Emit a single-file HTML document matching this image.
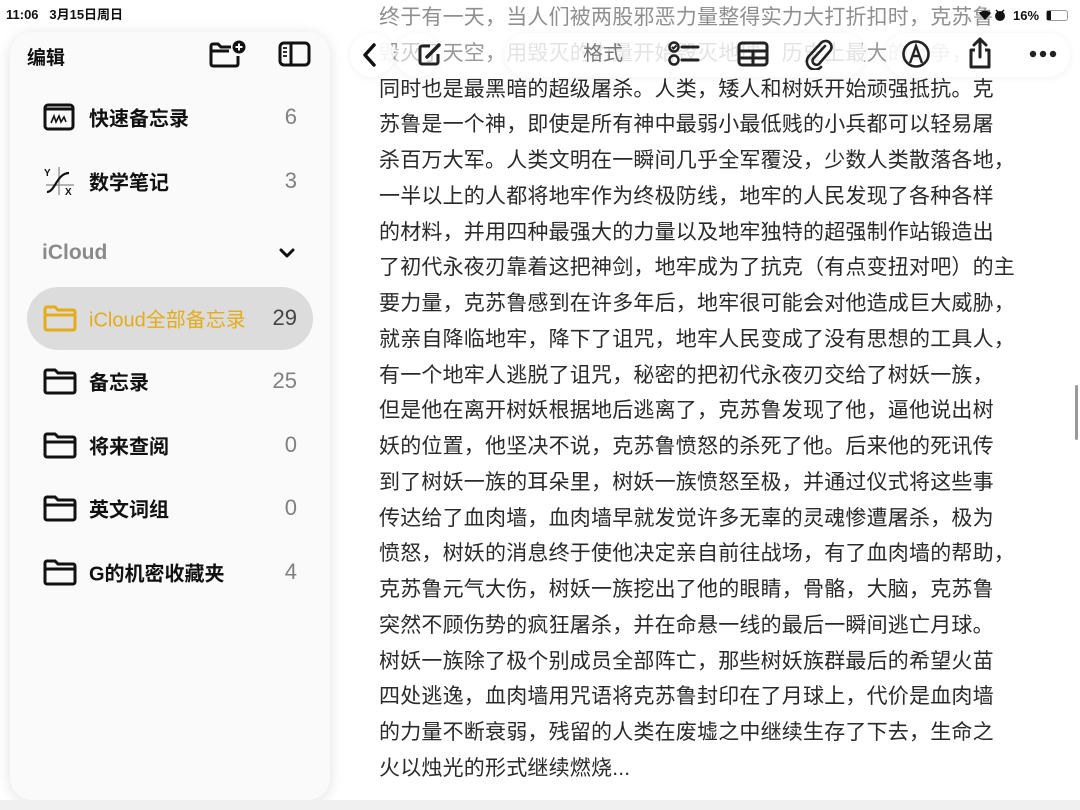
<!DOCTYPE html>
<html><head><meta charset="utf-8"><style>
*{margin:0;padding:0;box-sizing:border-box}
body{width:1080px;height:810px;overflow:hidden;background:#fff;font-family:"Liberation Sans","Noto Sans CJK SC",sans-serif;position:relative}
.txt{position:absolute;left:379px;top:0;font-size:21px;line-height:35.75px;color:#2a2a2a;white-space:nowrap;letter-spacing:0.2px}
.txt div:first-child{color:#8f8f8f}
.txt div:nth-child(2){color:#999}
.status{position:absolute;left:6px;top:8px;font-size:13px;font-weight:bold;color:#111;line-height:1}
.panel{position:absolute;left:10px;top:32px;width:320px;height:768px;background:#fafafa;border-radius:22px;box-shadow:0 2px 14px rgba(0,0,0,0.12)}
.row{position:absolute;left:0;width:320px;height:40px}
.row .lab{position:absolute;left:79px;top:50%;transform:translateY(-50%);font-size:20px;font-weight:bold;color:#111}
.row .cnt{position:absolute;right:33px;top:50%;transform:translateY(-50%);font-size:22px;color:#808080}
.row svg{position:absolute;left:33px;top:50%;transform:translateY(-50%)}
.sel{position:absolute;left:17px;top:255px;width:286px;height:63px;background:#dcdcdc;border-radius:32px}
.bar{position:absolute;top:33px;height:44px;background:rgba(255,255,255,0.82);border-radius:22px;box-shadow:0 1px 8px rgba(0,0,0,0.06)}
.ic{position:absolute}
</style></head><body>
<div class="txt">
<div>终于有一天，当人们被两股邪恶力量整得实力大打折扣时，克苏鲁</div>
<div>毁灭了天空，用毁灭的力量开始毁灭地球，历史上最大的战争，</div>
<div>同时也是最黑暗的超级屠杀。人类，矮人和树妖开始顽强抵抗。克</div>
<div>苏鲁是一个神，即使是所有神中最弱小最低贱的小兵都可以轻易屠</div>
<div>杀百万大军。人类文明在一瞬间几乎全军覆没，少数人类散落各地，</div>
<div>一半以上的人都将地牢作为终极防线，地牢的人民发现了各种各样</div>
<div>的材料，并用四种最强大的力量以及地牢独特的超强制作站锻造出</div>
<div>了初代永夜刃靠着这把神剑，地牢成为了抗克（有点变扭对吧）的主</div>
<div>要力量，克苏鲁感到在许多年后，地牢很可能会对他造成巨大威胁，</div>
<div>就亲自降临地牢，降下了诅咒，地牢人民变成了没有思想的工具人，</div>
<div>有一个地牢人逃脱了诅咒，秘密的把初代永夜刃交给了树妖一族，</div>
<div>但是他在离开树妖根据地后逃离了，克苏鲁发现了他，逼他说出树</div>
<div>妖的位置，他坚决不说，克苏鲁愤怒的杀死了他。后来他的死讯传</div>
<div>到了树妖一族的耳朵里，树妖一族愤怒至极，并通过仪式将这些事</div>
<div>传达给了血肉墙，血肉墙早就发觉许多无辜的灵魂惨遭屠杀，极为</div>
<div>愤怒，树妖的消息终于使他决定亲自前往战场，有了血肉墙的帮助，</div>
<div>克苏鲁元气大伤，树妖一族挖出了他的眼睛，骨骼，大脑，克苏鲁</div>
<div>突然不顾伤势的疯狂屠杀，并在命悬一线的最后一瞬间逃亡月球。</div>
<div>树妖一族除了极个别成员全部阵亡，那些树妖族群最后的希望火苗</div>
<div>四处逃逸，血肉墙用咒语将克苏鲁封印在了月球上，代价是血肉墙</div>
<div>的力量不断衰弱，残留的人类在废墟之中继续生存了下去，生命之</div>
<div>火以烛光的形式继续燃烧...</div>
</div>

<!-- toolbar pills -->
<div class="bar" style="left:350px;width:44px;background:rgba(255,255,255,0.9)"></div>
<div class="bar" style="left:395px;width:45px;background:rgba(255,255,255,0.5)"></div>
<div class="bar" style="left:505px;width:360px;background:rgba(255,255,255,0.72)"></div>
<div class="bar" style="left:885px;width:185px;background:rgba(255,255,255,0.88)"></div>
<div style="position:absolute;left:583px;top:44px;font-size:20px;line-height:20px;color:#777">格式</div>
<svg class="ic" style="left:360px;top:42px" width="20" height="26" viewBox="0 0 20 26"><path d="M14 3 L5 13 L14 23" fill="none" stroke="#111" stroke-width="3.5" stroke-linecap="round" stroke-linejoin="round"/></svg>
<svg class="ic" style="left:417px;top:41px" width="28" height="26" viewBox="0 0 28 26"><path d="M13 5 H5 a2 2 0 0 0 -2 2 V21 a2 2 0 0 0 2 2 H19 a2 2 0 0 0 2 -2 V13" fill="none" stroke="#222" stroke-width="3"/><path d="M10 16 L22 4" stroke="#222" stroke-width="3.5" stroke-linecap="round"/></svg>
<svg class="ic" style="left:667px;top:41px" width="34" height="26" viewBox="0 0 34 26"><circle cx="7" cy="6" r="4.5" fill="none" stroke="#222" stroke-width="2.5"/><path d="M5 6 l1.5 1.5 3-3" stroke="#222" stroke-width="2" fill="none"/><circle cx="7" cy="19" r="4.5" fill="none" stroke="#222" stroke-width="2.5"/><path d="M15 6 H31 M15 19 H31" stroke="#222" stroke-width="3" stroke-linecap="round"/></svg>
<svg class="ic" style="left:737px;top:41px" width="32" height="26" viewBox="0 0 32 26"><rect x="2" y="2" width="28" height="22" rx="3" fill="none" stroke="#222" stroke-width="3"/><path d="M2 10 H30 M2 17 H30 M16 10 V24" stroke="#222" stroke-width="3"/></svg>
<svg class="ic" style="left:805px;top:38px" width="30" height="32" viewBox="0 0 30 32"><path d="M22 10 L10 23 a4 4 0 0 0 6 5 L27 15 a6 6 0 0 0 -9 -8 L6 20 a8 8 0 0 0 12 11" fill="none" stroke="#222" stroke-width="2.6" stroke-linecap="round" transform="translate(-2 -2)"/></svg>
<svg class="ic" style="left:901px;top:39px" width="30" height="30" viewBox="0 0 30 30"><circle cx="15" cy="15" r="12.5" fill="none" stroke="#222" stroke-width="2.6"/><path d="M9 24 L15 7 L21 24 M12 17 H18" fill="none" stroke="#222" stroke-width="2.4"/></svg>
<svg class="ic" style="left:966px;top:36px" width="28" height="34" viewBox="0 0 28 34"><path d="M9 14 H5 V31 H23 V14 H19" fill="none" stroke="#222" stroke-width="3" stroke-linejoin="round"/><path d="M14 21 V3 M8 9 L14 3 L20 9" fill="none" stroke="#222" stroke-width="3" stroke-linecap="round" stroke-linejoin="round"/></svg>
<svg class="ic" style="left:1029px;top:49px" width="28" height="10" viewBox="0 0 28 10"><circle cx="4" cy="5" r="3.2" fill="#222"/><circle cx="14" cy="5" r="3.2" fill="#222"/><circle cx="24" cy="5" r="3.2" fill="#222"/></svg>

<!-- status -->
<div class="status">11:06&nbsp;&nbsp;&nbsp;3月15日周日</div>
<svg class="ic" style="left:978px;top:9px" width="36" height="13" viewBox="0 0 36 13"><path d="M1 4 a9 9 0 0 1 12 0 L7 11Z" fill="#111"/><circle cx="22" cy="7" r="5" fill="#111"/><path d="M18 1 l2 2 M26 1 l-2 2" stroke="#111" stroke-width="1.5"/></svg>
<div style="position:absolute;left:1013px;top:9px;font-size:13px;line-height:13px;font-weight:bold;color:#111">16%</div>
<div style="position:absolute;left:1046px;top:10px;width:22px;height:11px;border:1.5px solid #999;border-radius:3px"><div style="width:4px;height:100%;background:#111"></div></div>

<!-- sidebar -->
<div class="panel">
<div style="position:absolute;left:17px;top:11px;font-size:19px;font-weight:bold;color:#111">编辑</div>
<svg class="ic" style="left:199px;top:7px" width="38" height="30" viewBox="0 0 38 30"><path d="M22 8 H12 L9 5 H4 a2 2 0 0 0 -2 2 V25 a2 2 0 0 0 2 2 H27 a2 2 0 0 0 2 -2 V17" fill="none" stroke="#111" stroke-width="3"/><path d="M2 12 H20" stroke="#111" stroke-width="3"/><circle cx="30" cy="8" r="6.5" fill="#111"/><path d="M30 4.5 V11.5 M26.5 8 H33.5" stroke="#fff" stroke-width="2"/></svg>
<svg class="ic" style="left:268px;top:9px" width="33" height="26" viewBox="0 0 33 26"><rect x="2" y="2" width="29" height="22" rx="4" fill="none" stroke="#111" stroke-width="3"/><path d="M13 2 V24" stroke="#111" stroke-width="3"/><path d="M5 7 H9 M5 11 H9 M5 15 H9" stroke="#111" stroke-width="1.8"/></svg>

<div class="row" style="top:65px"><svg width="32" height="28" viewBox="0 0 32 28"><rect x="2" y="2" width="28" height="24" rx="3" fill="none" stroke="#111" stroke-width="3"/><path d="M2 6 H30" stroke="#111" stroke-width="3"/><path d="M8 20 l3-7 2 6 3-6 2 6 3-5 2 5" fill="none" stroke="#111" stroke-width="1.6"/></svg><span class="lab">快速备忘录</span><span class="cnt">6</span></div>
<div class="row" style="top:129px"><svg width="34" height="32" viewBox="0 0 34 32"><text x="1" y="11" font-size="10" font-weight="bold" font-family="Liberation Sans" fill="#111">Y</text><text x="22" y="30" font-size="10" font-weight="bold" font-family="Liberation Sans" fill="#111">X</text><path d="M16 2 V30 M3 20 H31" stroke="#999" stroke-width="1.5"/><path d="M4 27 C12 27 14 8 26 8" fill="none" stroke="#111" stroke-width="2.2"/></svg><span class="lab">数学笔记</span><span class="cnt">3</span></div>
<div style="position:absolute;left:32px;top:209px;font-size:21px;font-weight:bold;color:#8a8a8a">iCloud</div>
<svg class="ic" style="left:268px;top:215px" width="18" height="12" viewBox="0 0 18 12"><path d="M3 3 L9 9 L15 3" fill="none" stroke="#111" stroke-width="3" stroke-linecap="round" stroke-linejoin="round"/></svg>
<div class="sel"></div>
<div class="row" style="top:266px"><svg width="34" height="28" viewBox="0 0 34 28"><path d="M4 3 H12 L15 6 H30 a2 2 0 0 1 2 2 V24 a2 2 0 0 1 -2 2 H4 a2 2 0 0 1 -2 -2 V5 a2 2 0 0 1 2 -2Z M2 11 H32" fill="none" stroke="#e5ac1a" stroke-width="3"/></svg><span class="lab" style="color:#e5ac1a;font-weight:normal">iCloud全部备忘录</span><span class="cnt" style="color:#444">29</span></div>
<div class="row" style="top:329px"><svg width="34" height="28" viewBox="0 0 34 28"><path d="M4 3 H12 L15 6 H30 a2 2 0 0 1 2 2 V24 a2 2 0 0 1 -2 2 H4 a2 2 0 0 1 -2 -2 V5 a2 2 0 0 1 2 -2Z M2 11 H32" fill="none" stroke="#111" stroke-width="3"/></svg><span class="lab">备忘录</span><span class="cnt">25</span></div>
<div class="row" style="top:393px"><svg width="34" height="28" viewBox="0 0 34 28"><path d="M4 3 H12 L15 6 H30 a2 2 0 0 1 2 2 V24 a2 2 0 0 1 -2 2 H4 a2 2 0 0 1 -2 -2 V5 a2 2 0 0 1 2 -2Z M2 11 H32" fill="none" stroke="#111" stroke-width="3"/></svg><span class="lab">将来查阅</span><span class="cnt">0</span></div>
<div class="row" style="top:456px"><svg width="34" height="28" viewBox="0 0 34 28"><path d="M4 3 H12 L15 6 H30 a2 2 0 0 1 2 2 V24 a2 2 0 0 1 -2 2 H4 a2 2 0 0 1 -2 -2 V5 a2 2 0 0 1 2 -2Z M2 11 H32" fill="none" stroke="#111" stroke-width="3"/></svg><span class="lab">英文词组</span><span class="cnt">0</span></div>
<div class="row" style="top:520px"><svg width="34" height="28" viewBox="0 0 34 28"><path d="M4 3 H12 L15 6 H30 a2 2 0 0 1 2 2 V24 a2 2 0 0 1 -2 2 H4 a2 2 0 0 1 -2 -2 V5 a2 2 0 0 1 2 -2Z M2 11 H32" fill="none" stroke="#111" stroke-width="3"/></svg><span class="lab">G的机密收藏夹</span><span class="cnt">4</span></div>
</div>

<div style="position:absolute;left:1075px;top:385px;width:3px;height:55px;background:#999;border-radius:2px"></div>
<div style="position:absolute;left:0;top:800px;width:1080px;height:10px;background:#f0f0f0"></div>
</body></html>
